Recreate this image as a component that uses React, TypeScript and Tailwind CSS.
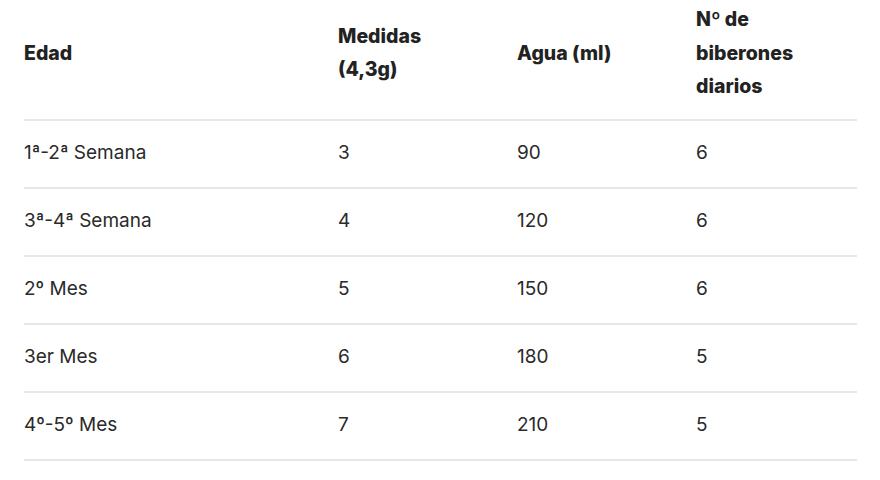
import React from "react";

const rows = [
  ["1ª-2ª Semana", "3", "90", "6"],
  ["3ª-4ª Semana", "4", "120", "6"],
  ["2º Mes", "5", "150", "6"],
  ["3er Mes", "6", "180", "5"],
  ["4º-5º Mes", "7", "210", "5"],
];

export default function App() {
  return (
    <div
      className="w-[880px] h-[480px] bg-white overflow-hidden text-[#222222]"
      style={{ fontFamily: "Inter, 'Noto Sans', sans-serif" }}
    >
      <div className="ml-[24px] w-[833px] -mt-[16px]">
        <div className="grid grid-cols-[314px_179px_179px_161px] items-center border-b-2 border-[#e8e8e8] pt-[19px] pb-[15px] text-[19.5px] leading-[33.5px] font-extrabold">
          <div>Edad</div>
          <div>
            Medidas
            <br />
            (4,3g)
          </div>
          <div>Agua (ml)</div>
          <div>
            Nº de
            <br />
            biberones
            <br />
            diarios
          </div>
        </div>
        {rows.map((r, i) => (
          <div
            key={i}
            className="grid grid-cols-[314px_179px_179px_161px] items-center border-b-2 border-[#e8e8e8] h-[68px] text-[19px] text-[#2a2a2a]"
          >
            {r.map((c, j) => (
              <div key={j}>{c}</div>
            ))}
          </div>
        ))}
      </div>
    </div>
  );
}
